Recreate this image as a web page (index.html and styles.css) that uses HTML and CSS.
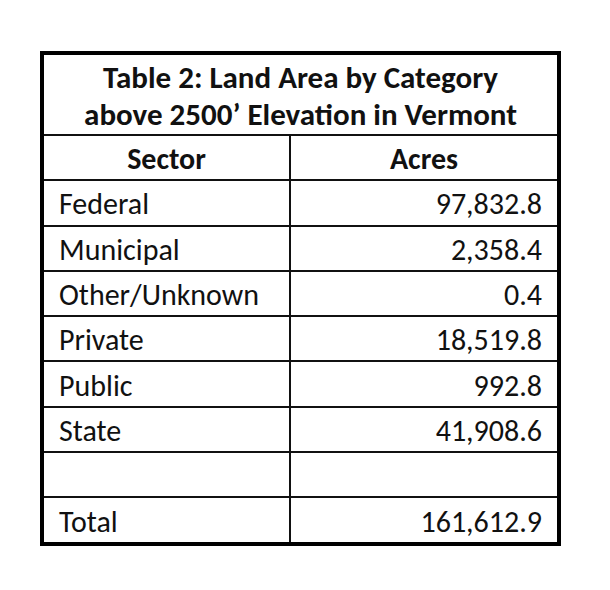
FILE: index.html
```html
<!DOCTYPE html>
<html>
<head>
<meta charset="utf-8">
<link rel="stylesheet" href="styles.css">
</head>
<body>
<table class="land">
  <colgroup><col class="col-sector"><col class="col-acres"></colgroup>
  <thead>
    <tr><th class="title" colspan="2">Table 2: Land Area by Category<br>above 2500’ Elevation in Vermont</th></tr>
    <tr><th class="head">Sector</th><th class="head">Acres</th></tr>
  </thead>
  <tbody>
    <tr><td class="name">Federal</td><td class="num">97,832.8</td></tr>
    <tr><td class="name">Municipal</td><td class="num">2,358.4</td></tr>
    <tr><td class="name">Other/Unknown</td><td class="num">0.4</td></tr>
    <tr><td class="name">Private</td><td class="num">18,519.8</td></tr>
    <tr><td class="name">Public</td><td class="num">992.8</td></tr>
    <tr><td class="name">State</td><td class="num">41,908.6</td></tr>
    <tr><td class="name"></td><td class="num"></td></tr>
    <tr><td class="name">Total</td><td class="num">161,612.9</td></tr>
  </tbody>
</table>
</body>
</html>
```
FILE: styles.css
```css
html, body {
  margin: 0;
  padding: 0;
  background: #ffffff;
}
body {
  padding: 51px 0 0 40px;
  font-family: Carlito, Lato, "Liberation Sans", sans-serif;
  color: #111111;
}
.land {
  border-collapse: collapse;
  border: 4px solid #000000;
  width: 521px;
  table-layout: fixed;
}
.col-sector {
  width: 248px;
}
.land th, .land td {
  border: 2px solid #111111;
  padding: 3px 15px 0;
  font-size: 30px;
  height: 40.3px;
  line-height: 36px;
  vertical-align: middle;
}
.land .title {
  font-weight: bold;
  font-size: 31px;
  height: 77px;
  line-height: 37px;
  text-align: center;
  padding-top: 2px;
}
.land .head {
  font-weight: bold;
  text-align: center;
}
.land .num {
  text-align: right;
}
```
